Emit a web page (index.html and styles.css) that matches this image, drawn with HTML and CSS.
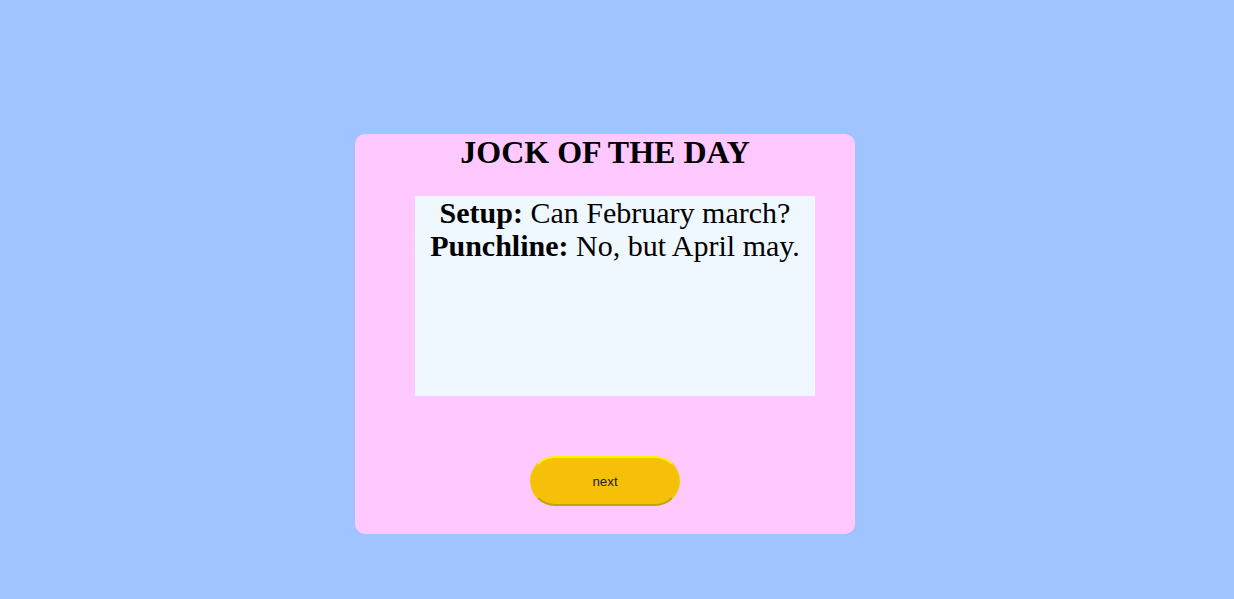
FILE: index.html
```html
<!DOCTYPE html>
<html>
<head>
<meta charset="utf-8">
<link rel="stylesheet" href="styles.css">
</head>
<body>
<main class="page">
  <section class="card">
    <h1 class="title">JOCK OF THE DAY</h1>
    <div class="joke">
      <div><b>Setup:</b> Can February march?</div>
      <div><b>Punchline:</b> No, but April may.</div>
    </div>
    <button class="next">next</button>
  </section>
</main>
</body>
</html>
```
FILE: styles.css
```css
html, body {
  margin: 0;
  padding: 0;
  height: 100%;
}
body {
  background: #a0c4ff;
  font-family: "Liberation Serif", "Times New Roman", serif;
}
.page {
  height: 599px;
  display: flex;
  justify-content: center;
  padding-top: 134px;
  padding-right: 24px;
  box-sizing: border-box;
}
.card {
  width: 500px;
  height: 400px;
  background: #ffc8ff;
  border-radius: 10px;
  display: flex;
  flex-direction: column;
  align-items: center;
}
.title {
  margin: 0;
  font-size: 32px;
  font-weight: bold;
  line-height: normal;
  color: #000;
}
.joke {
  margin-top: 25px;
  margin-left: 20px;
  width: 400px;
  height: 200px;
  background: #f0f8ff;
  font-size: 30px;
  line-height: 33px;
  text-align: center;
}
.next {
  margin-top: 60px;
  width: 150px;
  height: 50px;
  border-radius: 25px;
  background: #f6bf08;
  border: 2px solid #f2c800;
  border-top-color: #fff200;
  border-bottom-color: #c0a400;
  font-family: "Liberation Sans", Arial, sans-serif;
  font-size: 13.33px;
  color: #222;
  padding: 0;
}
```
